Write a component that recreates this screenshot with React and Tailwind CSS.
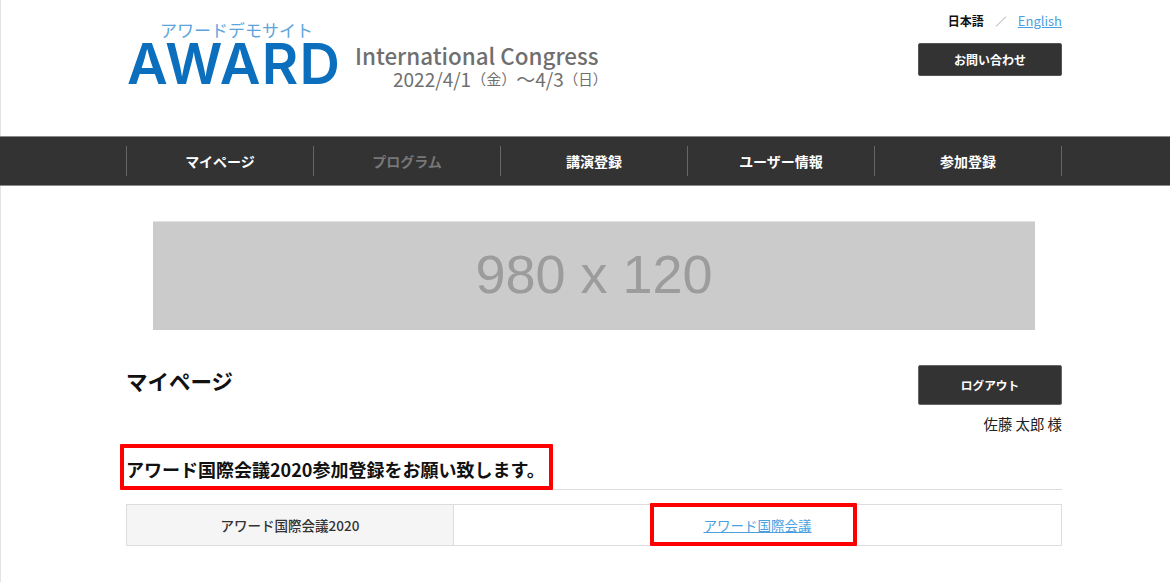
import React from "react";

const jp = "font-['Noto_Sans_CJK_JP','Noto_Sans',sans-serif]";

const navItems = [
  { label: "マイページ", color: "text-white" },
  { label: "プログラム", color: "text-[#777777]" },
  { label: "講演登録", color: "text-white" },
  { label: "ユーザー情報", color: "text-white" },
  { label: "参加登録", color: "text-white" },
];

function Logo() {
  return (
    <div className="flex">
      <div className="w-[226px]">
        <p className="ml-[31px] text-[17px] leading-[20px] text-[#5ea4dc]">アワードデモサイト</p>
        <p className="-ml-[2px] font-['Inter',sans-serif] text-[56px] leading-[48px] font-semibold tracking-[1.2px] text-[#0b6fbe]">
          AWARD
        </p>
      </div>
      <div className="w-[245px] pt-[23px] text-[#6f6f6f]">
        <p className="text-[22.4px] leading-[25px] font-medium whitespace-nowrap">International Congress</p>
        <p className="flex items-center pl-[38px] text-[19px] leading-[22px] whitespace-nowrap">
          <span>2022/4/1</span>
          <span className="text-[15px]">（金）</span>
          <span>〜4/3</span>
          <span className="text-[14.5px]">（日）</span>
        </p>
      </div>
    </div>
  );
}

function Header() {
  return (
    <header className="flex h-[136px] justify-between border-l border-[#e4e4e4] pl-[126px] pr-[108px]">
      <div className="pl-[2px] pt-[20px]">
        <Logo />
      </div>
      <div className="w-[144px] pt-[9px]">
        <div className="flex h-[24px] items-center justify-end text-[12px]">
          <span className="font-bold text-[#111111]">日本語</span>
          <span className="mx-[10px] h-[1px] w-[14px] -rotate-45 bg-[#c4c4c4]" />
          <a href="#" className="text-[13px] text-[#4a9fe0] underline">English</a>
        </div>
        <a
          href="#"
          className="mt-[10px] flex h-[33px] items-center justify-center rounded-[2px] border border-[#555555] bg-[#333333] text-[12px] font-bold text-white"
        >
          お問い合わせ
        </a>
      </div>
    </header>
  );
}

function Nav() {
  return (
    <nav className="flex h-[50px] items-center border-y border-[#8a8a8a] bg-[#333333] pl-[126px]">
      <div className="flex h-[30px] w-[936px] border-r border-[#666666]">
        {navItems.map((item) => (
          <a
            key={item.label}
            href="#"
            className={`flex w-[187px] items-center justify-center border-l border-[#666666] text-[14px] font-bold ${item.color}`}
          >
            {item.label}
          </a>
        ))}
      </div>
    </nav>
  );
}

export default function App() {
  return (
    <div className={`${jp} bg-white text-[#222222]`}>
      <Header />
      <Nav />
      <main className="h-[396px] border-l border-[#e4e4e4] pl-[126px] pr-[108px]">
        <div className="px-[26px] pt-[35px]">
          <div className="flex h-[109px] w-[882px] items-center justify-center border-t border-[#e2e2e2] bg-[#cbcbcb] pb-[3px] font-['Liberation_Sans',sans-serif] text-[54px] text-[#9c9c9c]">
            980 x 120
          </div>
        </div>

        <div className="mt-[35px] flex justify-between">
          <h1 className="-ml-px pt-px text-[21.5px] leading-[30px] font-bold text-[#111111]">マイページ</h1>
          <div className="w-[144px] text-right">
            <a
              href="#"
              className="flex h-[40px] items-center justify-center rounded-[2px] border border-[#666666] bg-[#333333] text-[11.7px] font-bold text-white"
            >
              ログアウト
            </a>
            <p className="mt-[9px] text-[14.4px] leading-[20px]">佐藤 太郎 様</p>
          </div>
        </div>

        <div className="relative mt-[22px]">
          <h2 className="border-b border-[#dddddd] pb-[7px] indent-[-1px] text-[18px] leading-[26px] font-bold text-[#111111]">
            アワード国際会議2020参加登録をお願い致します。
          </h2>
          <div className="absolute -top-[12px] -left-[7px] h-[46px] w-[433px] rounded-[1px] border-[4px] border-[#ff0000]" />
        </div>

        <div className="relative mt-[14px] -ml-px flex h-[42px] border border-[#dddddd] text-[13.5px]">
          <div className="flex w-[327px] items-center justify-center border-r border-[#dddddd] bg-[#f5f5f5] font-medium text-[#333333]">
            アワード国際会議2020
          </div>
          <div className="flex flex-1 items-center justify-center">
            <a href="#" className="text-[#4a9fe0] underline">アワード国際会議</a>
          </div>
          <div className="absolute -top-[2px] left-[523px] h-[43px] w-[207px] rounded-[1px] border-[4px] border-[#ff0000]" />
        </div>
      </main>
    </div>
  );
}
